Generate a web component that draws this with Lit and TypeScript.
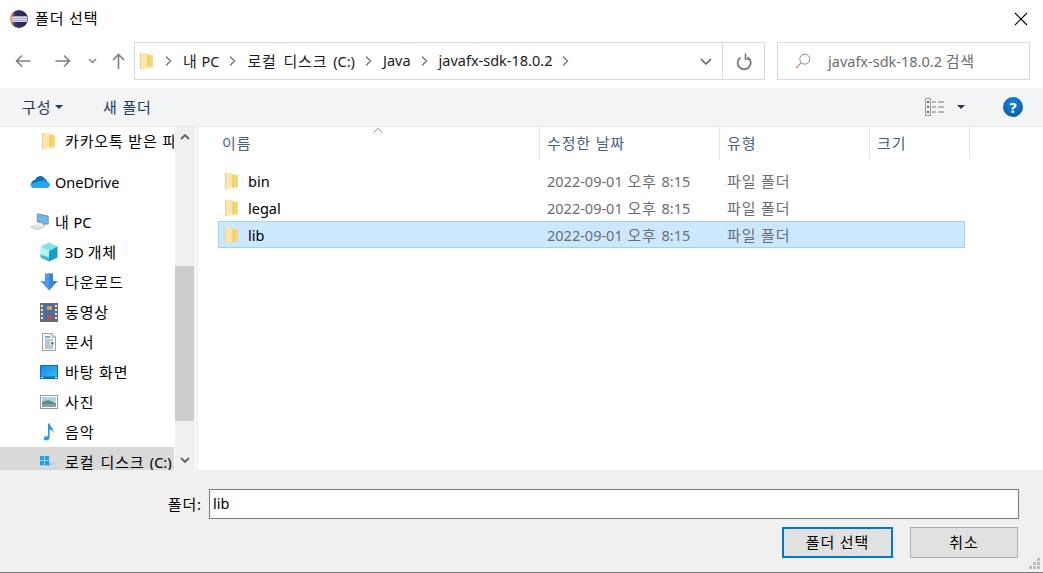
import { LitElement, html, css, svg } from "lit";
import { customElement } from "lit/decorators.js";

const t = (s: string) =>
  s
    .split(/([가-힣]+(?: [가-힣]+)*)/)
    .map((p, i) => (i % 2 ? html`<span class="ko">${p}</span>` : p));

const folder = svg`<svg class="folder" width="14" height="18" viewBox="0 0 14 18">
  <path d="M1 1 L7 1.2 L7 3 L13 3 L13 15.5 L7 15.5 Z" fill="#f8d775"/>
  <path d="M7.2 2.2 L8.8 2.6 L8.8 15.5 L7.2 15.5 Z" fill="#eec25f"/>
  <path d="M0.5 0.5 L7.5 2 L7.5 15 L2.2 18 L0.5 17 Z" fill="#fde7a8"/>
  <path d="M0.5 0.5 L0.5 17" stroke="#e8d39a" stroke-width="1"/>
</svg>`;

const icons: Record<string, unknown> = {
  folder,
  onedrive: svg`<svg width="20" height="14" viewBox="0 0 20 14"><path d="M5 5 C7 0 13 -0.5 15 4 L10 9 L1 9.5 C1 7 3 5 5 5 Z" fill="#0f6cbd"/><path d="M14 3.5 C16.5 4 17.5 5.5 17.5 7 L20 9 L12 9 Z" fill="#1b8fe0"/><path d="M0.6 9 L10 6 L20 9 C20.2 12 18 13 17 13 L4 13 C2 13 0.2 11.5 0.6 9 Z" fill="#28a8ea"/></svg>`,
  pc: svg`<svg width="22" height="20" viewBox="0 0 22 20"><path d="M8 1 L20 3.5 L20 12.5 L8 10 Z" fill="#66b9ee" stroke="#7f8a94" stroke-width="1"/><path d="M14 11.5 L17 12 L17 14 L14 13.5 Z" fill="#9aa3ab"/><path d="M1 14.5 L9 12.5 L16 15 L7 17.5 Z" fill="#e2e4e7"/><path d="M7 17.5 L16 15 L16 16 L7 18.8 L1 16 L1 14.5 Z" fill="#c2c6ca"/></svg>`,
  cube: svg`<svg width="18" height="20" viewBox="0 0 18 20"><path d="M9 0.5 L17.5 4.5 L9 9 L0.5 4.5 Z" fill="#7fe3e8"/><path d="M0.5 4.5 L9 9 L9 19.5 L0.5 15.5 Z" fill="#bdeef0"/><path d="M9 9 L17.5 4.5 L17.5 15.5 L9 19.5 Z" fill="#159fc2"/><path d="M0.5 12.5 L9 15.5 L9 19.5 L0.5 15.5 Z" fill="#3cbcd0"/></svg>`,
  down: svg`<svg width="18" height="18" viewBox="0 0 18 18"><path d="M5 0.5 H13 V8 H17.5 L9 17.5 L0.5 8 H5 Z" fill="#4a9be8"/><path d="M9 0.5 H13 V8 H17.5 L9 17.5 Z" fill="#3585d8"/></svg>`,
  video: svg`<svg width="18" height="19" viewBox="0 0 18 19"><rect x="0" y="0" width="18" height="19" fill="#6d6d6d"/><rect x="4" y="1.5" width="10" height="7.5" fill="#3d6fb5"/><rect x="4" y="10" width="10" height="7.5" fill="#3d6fb5"/><rect x="7" y="3" width="5" height="4" fill="#d9a13d"/><rect x="7" y="12" width="5" height="4" fill="#c8503c"/><g fill="#e8e8e8"><rect x="1" y="2" width="2" height="2"/><rect x="1" y="6" width="2" height="2"/><rect x="1" y="10" width="2" height="2"/><rect x="1" y="14" width="2" height="2"/><rect x="15" y="2" width="2" height="2"/><rect x="15" y="6" width="2" height="2"/><rect x="15" y="10" width="2" height="2"/><rect x="15" y="14" width="2" height="2"/></g></svg>`,
  doc: svg`<svg width="14" height="18" viewBox="0 0 14 18"><path d="M0.5 0.5 H10 L13.5 4 V17.5 H0.5 Z" fill="#f4f6f8" stroke="#9aa3ab"/><path d="M10 0.5 V4 H13.5" fill="#dfe3e7" stroke="#9aa3ab"/><path d="M3 4 H8" stroke="#3d8fd6" stroke-width="1.4"/><path d="M3 7 H11 M3 9 H8 M3 11 H8 M3 13 H11 M3 15 H11" stroke="#8a949c" stroke-width="1"/><rect x="9" y="9" width="2.5" height="2.5" fill="#4a7fb8"/></svg>`,
  desk: svg`<svg width="18" height="14" viewBox="0 0 18 14"><defs><linearGradient id="dk" x1="0" x2="1" y1="0" y2="1"><stop offset="0" stop-color="#0f8fe8"/><stop offset="1" stop-color="#3db4f5"/></linearGradient></defs><rect width="18" height="14" fill="#0a70bd"/><rect x="1" y="1" width="16" height="10.5" fill="url(#dk)"/><rect x="1" y="12" width="2" height="1" fill="#fff"/><rect x="15" y="12" width="2" height="1" fill="#fff"/></svg>`,
  pic: svg`<svg width="18" height="14" viewBox="0 0 18 14"><rect x="0.5" y="0.5" width="17" height="13" fill="#fff" stroke="#9a9a9a"/><rect x="2" y="2" width="14" height="5" fill="#a9d4e8"/><path d="M2 7 L8 5 L16 8 V12 H2 Z" fill="#5f8f7a"/><path d="M2 9 L16 9 V12 H2 Z" fill="#7aa0b8"/></svg>`,
  music: svg`<svg width="12" height="18" viewBox="0 0 12 18"><path d="M5 0.5 H6.6 C7 4 11 5 10.5 10 C10 8 8.5 6.8 6.6 6.5 V14.5 C6.6 16.5 4.5 17.5 2.8 17.5 C1 17.5 0.5 16 0.8 15 C1.4 13.4 3.6 12.8 5 13.3 Z" fill="#1e9bf0"/></svg>`,
  drive: svg`<svg width="18" height="18" viewBox="0 0 18 18"><path d="M2 11.5 L13 9 L18 11.5 L18 14 L7 17.5 L2 15 Z" fill="#c9ccd0"/><path d="M2 13 L7 15.5 L18 12" fill="none" stroke="#eef0f2" stroke-width="1"/><g fill="#12a5e8"><rect x="0" y="3" width="4.2" height="4.2"/><rect x="5" y="3" width="4.2" height="4.2"/><rect x="0" y="8" width="4.2" height="4.2"/><rect x="5" y="8" width="4.2" height="4.2"/></g></svg>`,
};

const navItems = [
  { icon: "folder", label: "카카오톡 받은 파일", cls: "indent gap-after" },
  { icon: "onedrive", label: "OneDrive", cls: "top gap-after2 latin" },
  { icon: "pc", label: "내 PC", cls: "top" },
  { icon: "cube", label: "3D 개체", cls: "indent" },
  { icon: "down", label: "다운로드", cls: "indent" },
  { icon: "video", label: "동영상", cls: "indent" },
  { icon: "doc", label: "문서", cls: "indent" },
  { icon: "desk", label: "바탕 화면", cls: "indent" },
  { icon: "pic", label: "사진", cls: "indent" },
  { icon: "music", label: "음악", cls: "indent" },
  { icon: "drive", label: "로컬 디스크 (C:)", cls: "indent sel wide" },
];

const rows = [
  { name: "bin", sel: false },
  { name: "legal", sel: false },
  { name: "lib", sel: true },
];

@customElement("app-root")
export class AppRoot extends LitElement {
  static styles = css`
    :host {
      display: flex;
      flex-direction: column;
      width: 1043px;
      height: 573px;
      overflow: hidden;
      background: #fff;
      font-family: "Noto Sans", "Noto Sans CJK KR", sans-serif;
      font-size: 14.5px;
      color: #000;
      box-sizing: border-box;
      border-bottom: 1px solid #777;
    }
    * { box-sizing: border-box; }
    .ko { font-size: 15px; letter-spacing: 0.85px; }
    .title { height: 37px; flex: none; display: flex; align-items: center; padding-left: 10px; gap: 7px; }
    .title .text { flex: 1; padding-bottom: 2px; }
    .close { width: 14px; height: 14px; margin-right: 15px; }
    .nav { height: 51px; flex: none; display: flex; align-items: flex-start; padding-top: 5px; padding-left: 15px; }
    .nav-btns { display: flex; align-items: center; height: 38px; width: 119px; flex: none; }
    .nav-btns svg { display: block; flex: none; }
    .addr { width: 631px; height: 38px; border: 1px solid #d9d9d9; display: flex; align-items: center; flex: none; }
    .crumbs { flex: 1; display: flex; align-items: center; padding-left: 5px; min-width: 0; }
    .crumb { margin-left: 11px; margin-right: 10px; color: #1a1a1a; padding-bottom: 2px; }
    .crumb.wide { word-spacing: 2px; }
    .crumbs svg.sep { flex: none; width: 7px; }
    .crumb-gap { width: 11px; flex: none; }
    .addr-drop { width: 33px; display: flex; justify-content: center; margin-left: auto; }
    .addr-ref { width: 42px; height: 36px; border-left: 1px solid #d9d9d9; display: flex; align-items: center; justify-content: center; flex: none; }
    .search { margin-left: 12px; width: 253px; height: 38px; border: 1px solid #d9d9d9; display: flex; align-items: center; padding-left: 17px; color: #6d6d6d; flex: none; }
    .search span.s { margin-left: 17px; padding-bottom: 2px; }
    .toolbar { height: 39px; flex: none; background: #f3f4f6; border-bottom: 1px solid #e7e8ea; display: flex; align-items: center; padding-left: 22px; color: #1e395b; }
    .toolbar .org { display: flex; align-items: center; gap: 4px; width: 81px; }
    .toolbar .lbl { padding-bottom: 2px; }
    .toolbar .caret { width: 0; height: 0; border-left: 4px solid transparent; border-right: 4px solid transparent; border-top: 4px solid #1e395b; }
    .toolbar .view-caret { margin-left: 13px; }
    .toolbar .right { margin-left: auto; display: flex; align-items: center; padding-right: 20px; }
    .help { width: 20px; height: 20px; border-radius: 50%; background: radial-gradient(circle at 50% 30%, #1c7fd0, #0558a8); color: #fff; font-weight: 700; font-size: 15px; display: flex; align-items: center; justify-content: center; margin-left: 38px; }
    .main { flex: 1; min-height: 0; display: flex; }
    .tree { width: 175px; flex: none; overflow: hidden; }
    .tree-inner { margin-top: -1px; }
    .tree-item { height: 30px; display: flex; align-items: center; white-space: nowrap; overflow: hidden; margin-right: 1px; }
    .tree-item .lbl { padding-bottom: 2px; }
    .tree-item.latin .lbl { padding-bottom: 0; }
    .tree-item.wide .lbl { word-spacing: 1.5px; }
    .tree-item .ic { width: 18px; display: flex; justify-content: center; flex: none; margin-right: 7px; }
    .tree-item.indent { padding-left: 40px; }
    .tree-item.top { padding-left: 30px; }
    .tree-item.top .ic { width: 20px; margin-right: 5px; }
    .tree-item.gap-after { margin-bottom: 11px; }
    .tree-item.gap-after2 { margin-bottom: 10px; }
    .tree-item.sel { background: #d9d9d9; }
    .scroll { width: 20px; flex: none; background: #f0f0f0; display: flex; flex-direction: column; align-items: center; justify-content: flex-start; }
    .scroll .arrow { height: 19px; flex: none; display: flex; align-items: center; justify-content: center; width: 100%; }
    .scroll .thumb { width: 19px; height: 155px; background: #cdcdcd; margin-top: 120px; margin-bottom: 29px; align-self: flex-start; }
    .split { width: 2px; flex: none; background: #f0f0f0; margin-left: 1px; }
    .content { flex: 1; min-width: 0; position: relative; }
    .head { height: 32px; display: grid; grid-template-columns: 320px 180px 150px 100px; margin-left: 22px; color: #4c607a; }
    .head div { border-right: 1px solid #e5e5e5; display: flex; align-items: center; padding: 0 0 2px 7px; }
    .head div:first-child { padding-left: 2px; }
    .sort { position: absolute; left: 175px; top: 1px; }
    .list { padding: 8px 0 0 20px; }
    .row { height: 27px; width: 747px; border: 1px solid transparent; display: grid; grid-template-columns: 321px 180px 1fr; align-items: center; }
    .row.sel { background: #cce8ff; border-color: #99d1ff; }
    .row .n { display: flex; align-items: center; padding-left: 6px; gap: 9px; }
    .row .d { color: #6d6d6d; padding-left: 7px; }
    .row .date { word-spacing: 1px; }
    .foot { height: 102px; flex: none; background: #f0f0f0; position: relative; padding: 19px 24px 0 0; display: flex; flex-direction: column; align-items: flex-end; }
    .field { display: flex; align-items: center; justify-content: flex-end; width: 100%; }
    .field label { margin-right: 8px; padding-bottom: 2px; }
    .input { width: 810px; height: 30px; border: 1px solid #7a7a7a; background: #fff; padding: 0 0 3px 3px; display: flex; align-items: center; }
    .btns { display: flex; gap: 17px; margin-top: 8px; padding-right: 1px; }
    .btn { height: 31px; background: #e1e1e1; border: 1px solid #adadad; display: flex; align-items: center; justify-content: center; padding-bottom: 2px; }
    .btn.ok { width: 111px; border: 2px solid #0078d7; }
    .btn.no { width: 108px; border-width: 1px; }
    .grip { position: absolute; right: 2px; bottom: 2px; }
    .nb-back { margin-right: 24px; }
    .nb-fwd { margin-right: 17px; }
    .nb-drop { margin-right: 15px; }
  `;

  render() {
    const sep = svg`<svg class="sep" width="7" height="12" viewBox="0 0 7 12"><path d="M1 1.5 L5.5 6 L1 10.5" fill="none" stroke="#7a7a7a" stroke-width="1.4"/></svg>`;
    return html`
      <div class="title">
        <svg width="18" height="18" viewBox="0 0 18 18">
          <defs><linearGradient id="ec" x1="0" x2="1" y1="0" y2="0"><stop offset="0" stop-color="#f2a04a"/><stop offset=".3" stop-color="#3b2f6b"/><stop offset="1" stop-color="#2c2255"/></linearGradient></defs>
          <circle cx="9" cy="9" r="9" fill="url(#ec)"/>
          <rect x="2.5" y="6" width="15" height="6" fill="#8d86b5"/>
          <rect x="1.5" y="6.6" width="15.5" height="1.2" fill="#e8e8f0"/>
          <rect x="1" y="8.6" width="16.4" height="1.2" fill="#e8e8f0"/>
          <rect x="1.5" y="10.6" width="15.5" height="1.2" fill="#e8e8f0"/>
        </svg>
        <span class="text">${t("폴더 선택")}</span>
        <svg class="close" viewBox="0 0 14 14"><path d="M1 1 L13 13 M13 1 L1 13" stroke="#000" stroke-width="1.1"/></svg>
      </div>
      <div class="nav">
        <div class="nav-btns">
          <svg class="nb-back" width="16" height="14" viewBox="0 0 16 14"><path d="M15.5 7 H1.5 M7 1.5 L1.5 7 L7 12.5" fill="none" stroke="#7f7f7f" stroke-width="1.6"/></svg>
          <svg class="nb-fwd" width="16" height="14" viewBox="0 0 16 14"><path d="M0.5 7 H14.5 M9 1.5 L14.5 7 L9 12.5" fill="none" stroke="#7f7f7f" stroke-width="1.6"/></svg>
          <svg class="nb-drop" width="9" height="6" viewBox="0 0 9 6"><path d="M1 1 L4.5 4.5 L8 1" fill="none" stroke="#7f7f7f" stroke-width="1.4"/></svg>
          <svg width="13" height="16" viewBox="0 0 13 16"><path d="M6.5 16 V1.5 M1 7 L6.5 1.5 L12 7" fill="none" stroke="#7f7f7f" stroke-width="1.6"/></svg>
        </div>
        <div class="addr">
          <div class="crumbs">
            ${folder}
            <span class="crumb-gap"></span>${sep}
            <span class="crumb">${t("내")} PC</span>${sep}
            <span class="crumb wide">${t("로컬 디스크")} (C:)</span>${sep}
            <span class="crumb">Java</span>${sep}
            <span class="crumb">javafx-sdk-18.0.2</span>${sep}
          </div>
          <div class="addr-drop"><svg width="12" height="7" viewBox="0 0 12 7"><path d="M1 1 L6 6 L11 1" fill="none" stroke="#606060" stroke-width="1.5"/></svg></div>
          <div class="addr-ref"><svg width="16" height="17" viewBox="0 0 16 17"><path d="M11 3.2 A6.5 6.5 0 1 1 4 3.4" fill="none" stroke="#7a7a7a" stroke-width="1.8" transform="translate(.5 1)"/><path d="M9.5 0.5 V6 L14 6" fill="none" stroke="#7a7a7a" stroke-width="1.6"/></svg></div>
        </div>
        <div class="search">
          <svg width="16" height="16" viewBox="0 0 16 16"><circle cx="9.8" cy="6.2" r="5" fill="none" stroke="#8a8a8a" stroke-width="1"/><path d="M6.2 9.8 L1 15" stroke="#c08a50" stroke-width="1.1"/></svg>
          <span class="s">javafx-sdk-18.0.2 ${t("검색")}</span>
        </div>
      </div>
      <div class="toolbar">
        <div class="org"><span class="lbl">${t("구성")}</span><span class="caret"></span></div>
        <span class="lbl">${t("새 폴더")}</span>
        <div class="right">
          <svg width="19" height="18" viewBox="0 0 19 18">
            <rect x="0.5" y="0.5" width="5" height="17" fill="#f5f5f5" stroke="#9a9a9a"/>
            <rect x="2" y="3" width="2" height="2" fill="#3d7a5a"/><rect x="2" y="8" width="2" height="2" fill="#4a72b0"/><rect x="2" y="13" width="2" height="2" fill="#c8402c"/>
            <path d="M7 4 H11 M13 4 H19 M7 9 H11 M13 9 H19 M7 14 H11 M13 14 H19" stroke="#7a7a7a" stroke-width="1"/>
          </svg>
          <span class="caret view-caret"></span>
          <div class="help">?</div>
        </div>
      </div>
      <div class="main">
        <div class="tree">
          <div class="tree-inner">
            ${navItems.map(
              (i) => html`<div class="tree-item ${i.cls}"><span class="ic">${icons[i.icon]}</span><span class="lbl">${t(i.label)}</span></div>`
            )}
          </div>
        </div>
        <div class="scroll">
          <div class="arrow"><svg width="10" height="6" viewBox="0 0 10 6"><path d="M1 5 L5 1 L9 5" fill="none" stroke="#606060" stroke-width="1.8"/></svg></div>
          <div class="thumb"></div>
          <div class="arrow"><svg width="10" height="6" viewBox="0 0 10 6"><path d="M1 1 L5 5 L9 1" fill="none" stroke="#606060" stroke-width="1.8"/></svg></div>
        </div>
        <div class="split"></div>
        <div class="content">
          <svg class="sort" width="10" height="5" viewBox="0 0 10 5"><path d="M0.5 4.5 L5 0.5 L9.5 4.5" fill="none" stroke="#8a8a8a" stroke-width="1"/></svg>
          <div class="head"><div>${t("이름")}</div><div>${t("수정한 날짜")}</div><div>${t("유형")}</div><div>${t("크기")}</div></div>
          <div class="list">
            ${rows.map(
              (r) => html`<div class="row ${r.sel ? "sel" : ""}">
                <div class="n">${folder}<span>${r.name}</span></div>
                <div class="d date">2022-09-01 ${t("오후")} 8:15</div>
                <div class="d">${t("파일 폴더")}</div>
              </div>`
            )}
          </div>
        </div>
      </div>
      <div class="foot">
        <div class="field"><label>${t("폴더")}:</label><div class="input">lib</div></div>
        <div class="btns"><div class="btn ok">${t("폴더 선택")}</div><div class="btn no">${t("취소")}</div></div>
        <svg class="grip" width="12" height="12" viewBox="0 0 12 12" fill="#bfbfbf"><rect x="8" y="0" width="3" height="3"/><rect x="4" y="4" width="3" height="3"/><rect x="8" y="4" width="3" height="3"/><rect x="0" y="8" width="3" height="3"/><rect x="4" y="8" width="3" height="3"/><rect x="8" y="8" width="3" height="3"/></svg>
      </div>
    `;
  }
}
